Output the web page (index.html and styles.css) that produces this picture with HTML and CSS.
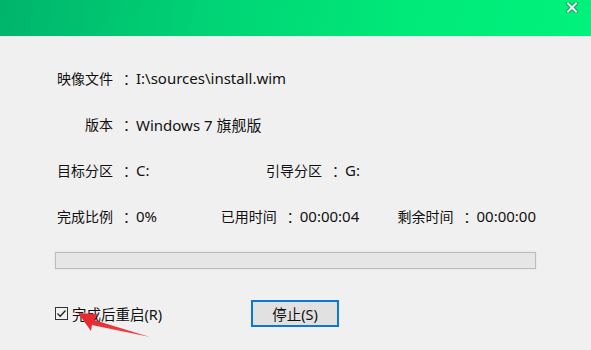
FILE: index.html
```html
<!DOCTYPE html>
<html lang="zh-CN">
  <head>
    <meta charset="UTF-8" />
    <title>安装进度</title>
    <link rel="stylesheet" href="styles.css">
  </head>
  <body>
    <div class="window">
      <!-- Title Bar -->
      <div class="titlebar">
        <svg class="close" width="12" height="11" viewBox="0 0 12 11">
          <path d="M2 1.5 L10 9.5 M10 1.5 L2 9.5" stroke="#1f9a5c" stroke-width="4" stroke-linecap="square" />
          <path d="M2 1.5 L10 9.5 M10 1.5 L2 9.5" stroke="#e9fff2" stroke-width="2" stroke-linecap="square" />
        </svg>
      </div>

      <!-- Info Rows -->
      <div class="content">
        <div class="row">
          <div class="field">
            <span class="key"><span class="label">映像文件</span><span class="colon">：</span></span>
            <span class="value">I:\sources\install.wim</span>
          </div>
        </div>

        <div class="row">
          <div class="field">
            <span class="key"><span class="label">版本</span><span class="colon">：</span></span>
            <span class="value">Windows 7 旗舰版</span>
          </div>
        </div>

        <div class="row">
          <div class="field target">
            <span class="key"><span class="label">目标分区</span><span class="colon">：</span></span>
            <span class="value">C:</span>
          </div>
          <div class="field">
            <span class="key"><span class="label">引导分区</span><span class="colon">：</span></span>
            <span class="value">G:</span>
          </div>
        </div>

        <div class="row">
          <div class="field percent">
            <span class="key"><span class="label">完成比例</span><span class="colon">：</span></span>
            <span class="value">0%</span>
          </div>
          <div class="field used">
            <span class="key"><span class="label">已用时间</span><span class="colon">：</span></span>
            <span class="value">00:00:04</span>
          </div>
          <div class="field">
            <span class="key"><span class="label">剩余时间</span><span class="colon">：</span></span>
            <span class="value">00:00:00</span>
          </div>
        </div>

        <!-- Progress -->
        <div class="progress"></div>

        <!-- Bottom Controls -->
        <div class="controls">
          <label class="restart">
            <span class="checkbox">
              <svg width="11" height="11" viewBox="0 0 11 11">
                <path d="M1.5 5.5 L4.2 8.3 L9.5 2.5" fill="none" stroke="#222" stroke-width="1.3" />
              </svg>
            </span>
            完成后重启(R)
          </label>
          <button class="stop">停止(S)</button>
        </div>
      </div>

      <!-- Annotation arrow -->
      <svg class="arrow" width="591" height="350" viewBox="0 0 591 350">
        <defs>
          <linearGradient id="red" x1="0" y1="0" x2="1" y2="0">
            <stop offset="0" stop-color="#e6262e" />
            <stop offset="1" stop-color="#f0454a" />
          </linearGradient>
        </defs>
        <polygon points="78,313 98,314 94,320 150,337 92,325 91,331" fill="url(#red)" />
      </svg>
    </div>
  </body>
</html>
```

FILE: styles.css
```css
/* Global Reset */
* {
  margin: 0;
  padding: 0;
  box-sizing: border-box;
}

body {
  font-family: "Noto Sans", "Noto Sans CJK SC", sans-serif;
  font-size: 14px;
  color: #111;
  background-color: #f0f0f0;
  overflow: hidden;
}

.window {
  position: relative;
  width: 591px;
  height: 350px;
}

/* Title Bar */
.titlebar {
  height: 36px;
  background: linear-gradient(100deg, #00b46c 0%, #00d375 35%, #00ea79 70%, #00f27c 100%);
  display: flex;
  justify-content: flex-end;
  align-items: flex-start;
  padding: 2px 13px 0 0;
}

/* Content */
.content {
  padding: 19px 55px 0 55px;
}

.row {
  display: flex;
  height: 46px;
  align-items: center;
}

.field {
  display: flex;
  align-items: center;
  white-space: nowrap;
}

.key {
  width: 81px;
  display: flex;
  justify-content: flex-end;
  font-family: "Noto Sans CJK SC", sans-serif;
}

.colon {
  margin-left: 10px;
  width: 13px;
}

.value {
  font-size: 15px;
}

.field.target {
  width: 209px;
}

.field.percent {
  width: 164px;
}

.field.used {
  width: 177px;
}

/* Progress Bar */
.progress {
  margin-top: 13px;
  height: 17px;
  background-color: #e6e6e6;
  border: 1px solid #bcbcbc;
  box-shadow: 0 0 0 1px #e9e9e9;
}

/* Bottom Controls */
.controls {
  margin-top: 31px;
  height: 27px;
  display: flex;
  align-items: center;
}

.restart {
  display: flex;
  align-items: center;
  width: 196px;
  font-size: 14.5px;
}

.checkbox {
  width: 13px;
  height: 13px;
  border: 1px solid #333;
  margin-right: 4px;
  display: flex;
  align-items: center;
  justify-content: center;
}

.stop {
  width: 88px;
  height: 27px;
  background-color: #e1e1e1;
  border: 2px solid #0a78d4;
  font-family: "Noto Sans", "Noto Sans CJK SC", sans-serif;
  font-size: 14.5px;
  color: #111;
}

/* Annotation */
.arrow {
  position: absolute;
  top: 0;
  left: 0;
  pointer-events: none;
}
```
